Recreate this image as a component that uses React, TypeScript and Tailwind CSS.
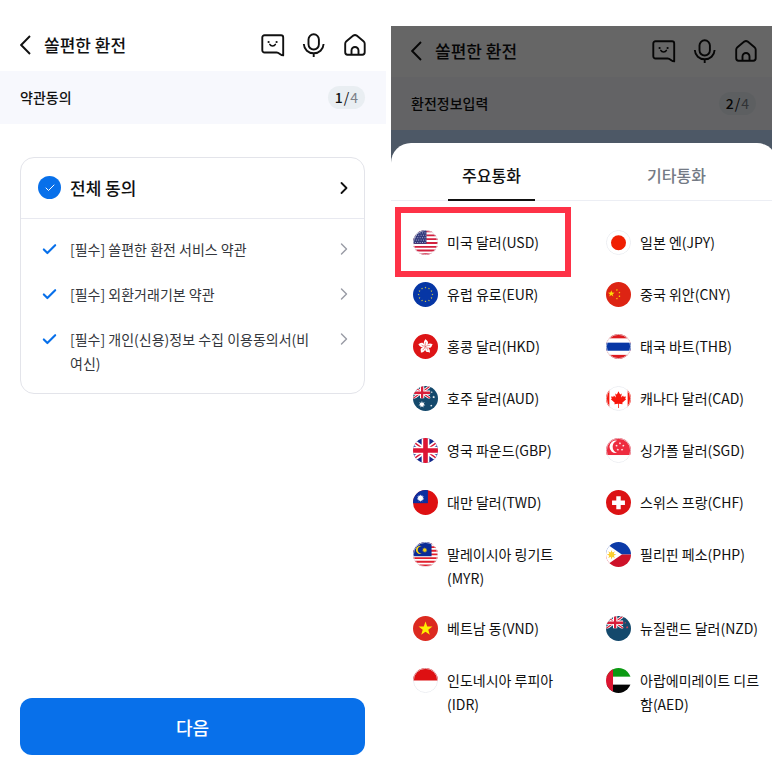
import clsx from "clsx";
import { Check, ChevronRight } from "lucide-react";
import { useState, type ReactNode } from "react";

const AGREEMENTS = [
  "[필수] 쏠편한 환전 서비스 약관",
  "[필수] 외환거래기본 약관",
  "[필수] 개인(신용)정보 수집 이용동의서(비여신)",
];

const CURRENCIES = [
  { code: "USD", name: "미국 달러" },
  { code: "JPY", name: "일본 엔" },
  { code: "EUR", name: "유럽 유로" },
  { code: "CNY", name: "중국 위안" },
  { code: "HKD", name: "홍콩 달러" },
  { code: "THB", name: "태국 바트" },
  { code: "AUD", name: "호주 달러" },
  { code: "CAD", name: "캐나다 달러" },
  { code: "GBP", name: "영국 파운드" },
  { code: "SGD", name: "싱가폴 달러" },
  { code: "TWD", name: "대만 달러" },
  { code: "CHF", name: "스위스 프랑" },
  { code: "MYR", name: "말레이시아 링기트" },
  { code: "PHP", name: "필리핀 페소" },
  { code: "VND", name: "베트남 동" },
  { code: "NZD", name: "뉴질랜드 달러" },
  { code: "IDR", name: "인도네시아 루피아" },
  { code: "AED", name: "아랍에미레이트 디르함" },
];

// Flags with white at the edge need an outline against the sheet
const OUTLINED = ["USD", "JPY", "THB", "CAD", "SGD", "MYR", "IDR"];

function starPoints(
  cx: number,
  cy: number,
  r: number,
  tips = 5,
  inner = 0.4,
  turn = 0,
) {
  return Array.from({ length: tips * 2 }, (_, i) => {
    const radius = i % 2 === 0 ? r : r * inner;
    const angle = (Math.PI * i) / tips - Math.PI / 2 + turn;
    return `${(cx + radius * Math.cos(angle)).toFixed(2)},${(cy + radius * Math.sin(angle)).toFixed(2)}`;
  }).join(" ");
}

// Union Jack drawn in the upper left quarter of the Pacific flags
function JackCanton() {
  return (
    <svg x="0" y="0" width="18" height="13" viewBox="0 0 18 13">
      <path d="M0 0L18 13M18 0L0 13" stroke="#fff" strokeWidth="3" />
      <path d="M0 0L18 13M18 0L0 13" stroke="#d81e3a" strokeWidth="1.2" />
      <path d="M9.5 0V13M0 7H18" stroke="#fff" strokeWidth="4.4" />
      <path d="M9.5 0V13M0 7H18" stroke="#d81e3a" strokeWidth="2.4" />
    </svg>
  );
}

const FLAGS: Record<string, ReactNode> = {
  USD: (
    <>
      <rect width="26" height="26" fill="#fff" />
      <path
        d="M0 1.5H26M0 5.5H26M0 9.5H26M0 13.5H26M0 17.5H26M0 21.3H26M0 25H26"
        stroke="#d2213f"
        strokeWidth="1.9"
      />
      <rect width="14" height="14.4" fill="#343a7c" />
      <path
        d="M2 3H14M3 5.5H14M2 8H14M3 10.5H14M2 13H14"
        stroke="#c9cce6"
        strokeWidth="0.9"
        strokeDasharray="0.9 1.6"
      />
    </>
  ),
  EUR: (
    <>
      <rect width="26" height="26" fill="#0636a5" />
      {Array.from({ length: 12 }, (_, i) => (
        <polygon
          key={i}
          fill="#e5d43c"
          points={starPoints(
            13 + 7.2 * Math.cos((i * Math.PI) / 6),
            13 + 7.2 * Math.sin((i * Math.PI) / 6),
            1.1,
          )}
        />
      ))}
    </>
  ),
  HKD: (
    <>
      <rect width="26" height="26" fill="#dd1416" />
      {[12, 84, 156, 228, 300].map((deg) => (
        <g key={deg} transform={`rotate(${deg} 13 13)`}>
          <path
            d="M13 12.8C10.4 11.2 9.4 8.2 11.6 5.2C12.2 6.6 14.8 6.4 14.8 9.2C14.8 10.8 13.6 11.6 13 12.8Z"
            fill="#fff"
          />
          <path
            d="M13 12C12 10.6 11.9 9.4 12.5 8.4"
            fill="none"
            stroke="#dd1416"
            strokeWidth="0.5"
          />
        </g>
      ))}
    </>
  ),
  AUD: (
    <>
      <rect width="26" height="26" fill="#14496c" />
      <JackCanton />
      <polygon points={starPoints(9.3, 19.2, 3.6, 7, 0.5)} fill="#fff" />
      <polygon points={starPoints(21.5, 11.5, 1.5, 7, 0.5)} fill="#fff" />
      <polygon points={starPoints(19.5, 6.5, 1, 7, 0.5)} fill="#fff" />
      <polygon points={starPoints(19, 20.5, 1.2, 7, 0.5)} fill="#fff" />
    </>
  ),
  GBP: (
    <>
      <rect width="26" height="26" fill="#152a8c" />
      <path d="M-3 1.5L29 24.5M29 1.5L-3 24.5" stroke="#fff" strokeWidth="5" />
      <path d="M-3 1.5L29 24.5M29 1.5L-3 24.5" stroke="#dc1433" strokeWidth="1.5" />
      <path d="M13 0V26M0 13H26" stroke="#fff" strokeWidth="8" />
      <path d="M13 0V26M0 13H26" stroke="#dc1433" strokeWidth="4.8" />
    </>
  ),
  TWD: (
    <>
      <rect width="26" height="26" fill="#de1012" />
      <rect width="15.5" height="13.7" fill="#0c2fa0" />
      <polygon points={starPoints(7.8, 8.5, 3.9, 12, 0.6)} fill="#fff" />
    </>
  ),
  MYR: (
    <>
      <rect width="26" height="26" fill="#fff" />
      <path
        d="M0 1.5H26M0 5.3H26M0 9.1H26M0 12.9H26M0 16.7H26M0 20.5H26M0 24.3H26"
        stroke="#e0202e"
        strokeWidth="1.9"
      />
      <rect width="19.3" height="14.8" fill="#0b2c96" />
      <path d="M9.5 4.6A4.2 4.2 0 1 0 9.5 11.8A3.7 3.7 0 1 1 9.5 4.6Z" fill="#f6d313" />
      <polygon points={starPoints(12.2, 8.3, 2.9, 11, 0.5)} fill="#f6d313" />
    </>
  ),
  VND: (
    <>
      <rect width="26" height="26" fill="#dc2a20" />
      <polygon points={starPoints(13, 13.3, 7.6)} fill="#ffef00" />
    </>
  ),
  IDR: (
    <>
      <rect width="26" height="26" fill="#fff" />
      <rect width="26" height="13" fill="#de1012" />
    </>
  ),
  JPY: (
    <>
      <rect width="26" height="26" fill="#fff" />
      <circle cx="13" cy="13.3" r="7.8" fill="#f01f02" />
    </>
  ),
  CNY: (
    <>
      <rect width="26" height="26" fill="#dd2413" />
      <polygon points={starPoints(5.5, 12.2, 3.6)} fill="#fddb05" />
      <polygon points={starPoints(11.3, 8.3, 1.2, 5, 0.4, 0.4)} fill="#fddb05" />
      <polygon points={starPoints(14, 11, 1.2, 5, 0.4, 0.2)} fill="#fddb05" />
      <polygon points={starPoints(14, 14.8, 1.2)} fill="#fddb05" />
      <polygon points={starPoints(11.3, 17.3, 1.2, 5, 0.4, 0.4)} fill="#fddb05" />
    </>
  ),
  THB: (
    <>
      <rect width="26" height="26" fill="#de1a1f" />
      <rect y="4.5" width="26" height="17.2" fill="#fff" />
      <rect y="9" width="26" height="8.4" fill="#0636a5" />
    </>
  ),
  CAD: (
    <>
      <rect width="26" height="26" fill="#fff" />
      <path d="M0 0H3.5V26H0ZM22.5 0H26V26H22.5Z" fill="#f8170c" />
      <path
        d="M13 5.5L14.7 8.8L16.4 7.9L15.7 12L17.8 10L18.3 11.2L20.8 10.8L20 13.2L21 13.9L16.9 17.4L17.3 18.9L13.4 18.4V23H12.6V18.4L8.7 18.9L9.1 17.4L5 13.9L6 13.2L5.2 10.8L7.7 11.2L8.2 10L10.3 12L9.6 7.9L11.3 8.8Z"
        fill="#f8170c"
      />
    </>
  ),
  SGD: (
    <>
      <rect width="26" height="26" fill="#fff" />
      <rect width="26" height="17.7" fill="#ee2c3f" />
      <path d="M11.5 2.8A6.5 6.5 0 1 0 11.5 15.5A6.7 6.7 0 0 1 11.5 2.8Z" fill="#fff" />
      {[0, 1, 2, 3, 4].map((i) => (
        <polygon
          key={i}
          fill="#fff"
          points={starPoints(
            14.5 + 3.7 * Math.sin((i * Math.PI * 2) / 5),
            9.2 - 3.7 * Math.cos((i * Math.PI * 2) / 5),
            1.4,
          )}
        />
      ))}
    </>
  ),
  CHF: (
    <>
      <rect width="26" height="26" fill="#dc1214" />
      <path d="M13 6.6V20M6.3 13.3H19.7" stroke="#fff" strokeWidth="4.6" />
    </>
  ),
  PHP: (
    <>
      <rect width="26" height="13" fill="#0c3aa8" />
      <rect y="13" width="26" height="13" fill="#ce1229" />
      <path d="M-1 1L16.5 13L-1 25Z" fill="#fff" />
      <polygon points={starPoints(5.8, 13.2, 5, 8, 0.45)} fill="#fbc926" />
      <circle cx="5.8" cy="13.2" r="2.6" fill="#fbd030" />
    </>
  ),
  NZD: (
    <>
      <rect width="26" height="26" fill="#14496c" />
      <JackCanton />
      <polygon points={starPoints(22, 11.8, 1.6)} fill="#e0405a" />
      <polygon points={starPoints(20, 7, 1.1)} fill="#e0405a" />
    </>
  ),
  AED: (
    <>
      <rect width="26" height="26" fill="#fff" />
      <rect width="26" height="9" fill="#0b9a12" />
      <rect y="17.3" width="26" height="9" fill="#050505" />
      <rect width="7.3" height="26" fill="#dc1530" />
    </>
  ),
};

function Flag({ code }: { code: string }) {
  return (
    <svg
      viewBox="0 0 26 26"
      className="size-[25px] shrink-0 overflow-hidden rounded-full"
      aria-hidden="true"
    >
      {FLAGS[code]}
      {OUTLINED.includes(code) && (
        <circle cx="13" cy="13" r="12.6" fill="none" stroke="#e6e9ee" strokeWidth="0.8" />
      )}
    </svg>
  );
}

function ScreenHeader() {
  return (
    <header className="flex h-[51px] items-center pr-[19px] pb-[2px] pl-5">
      <button type="button" aria-label="뒤로" className="mr-3">
        <svg viewBox="0 0 12 20" className="h-5 w-3" fill="none" stroke="currentColor">
          <path d="M10 1L1.2 10L10 19" strokeWidth="1.9" />
        </svg>
      </button>
      <h1 className="text-[17px] font-medium">쏠편한 환전</h1>
      <div className="ml-auto flex gap-[17px]">
        <button type="button" aria-label="챗봇">
          <svg viewBox="0 0 24 24" className="size-6" fill="none" stroke="currentColor" strokeWidth="1.9">
            <path
              d="M3.5 2.3H20A2.2 2.2 0 0 1 22.2 4.5V22.4C19.4 22.4 18.4 19.5 15.7 19.5H3.5A2.2 2.2 0 0 1 1.3 17.3V4.5A2.2 2.2 0 0 1 3.5 2.3Z"
              strokeLinejoin="round"
            />
            <path d="M8.8 11.4C9.8 13.4 13.4 13.4 14.4 11.4" strokeWidth="1.5" strokeLinecap="round" />
            <circle cx="7.6" cy="9" r="1.1" fill="currentColor" stroke="none" />
            <circle cx="15.6" cy="9" r="1.1" fill="currentColor" stroke="none" />
          </svg>
        </button>
        <button type="button" aria-label="음성">
          <svg viewBox="0 0 24 24" className="size-6" fill="none" stroke="currentColor" strokeWidth="1.9">
            <rect x="6.5" y="1.3" width="10.4" height="15.2" rx="5.2" />
            <path d="M1.8 11C2.1 16.5 6.3 20.3 11.7 20.3S21.3 16.5 21.6 11M11.7 20.3V24" />
          </svg>
        </button>
        <button type="button" aria-label="홈">
          <svg viewBox="0 0 24 24" className="size-6" fill="none" stroke="currentColor" strokeWidth="1.9" strokeLinejoin="round">
            <path d="M10.3 2.6Q12 1.4 13.7 2.6L20.5 8.2Q21.7 9.2 21.7 10.7V19.3Q21.7 21.7 19.3 21.7H4.5Q2.2 21.7 2.2 19.3V10.7Q2.2 9.2 3.4 8.2Z" />
            <path d="M8.5 21.7V17.5A3.5 3.5 0 0 1 15.5 17.5V21.7" />
          </svg>
        </button>
      </div>
    </header>
  );
}

function StepBar({ title, step }: { title: string; step: number }) {
  return (
    <div className="flex h-[53px] items-center justify-between bg-[#f7f8fd] pr-[21px] pb-px pl-5">
      <h2 className="text-sm font-medium">{title}</h2>
      <p className="flex h-[23px] items-center rounded-full bg-[#e9eef2] px-[7px] text-sm">
        <span className="font-medium">{step}</span>
        <span className="px-px">/</span>
        <span className="text-[#7c8088]">4</span>
      </p>
    </div>
  );
}

function TermsScreen() {
  const [agreed, setAgreed] = useState(AGREEMENTS.map(() => true));
  const allAgreed = agreed.every(Boolean);

  return (
    <section className="flex flex-col pt-5">
      <ScreenHeader />
      <StepBar title="약관동의" step={1} />

      <div className="mt-[33px] mr-[21px] mb-6 ml-5 rounded-[14px] border border-[#e3e4ea]">
        <div className="flex h-[61px] items-center border-b border-[#e8e9f0] pr-[10px] pb-px pl-[17px]">
          <label className="flex items-center gap-[9px] text-[17px] font-medium">
            <span className="grid place-items-center">
              <input
                type="checkbox"
                checked={allAgreed}
                onChange={() => setAgreed(AGREEMENTS.map(() => !allAgreed))}
                className="size-[23px] appearance-none rounded-full bg-[#c9cdd4] [grid-area:1/1] checked:bg-[#0870ea]"
              />
              <Check className="pointer-events-none size-3 text-white [grid-area:1/1]" strokeWidth={2} />
            </span>
            전체 동의
          </label>
          <button type="button" aria-label="전체 동의 보기" className="ml-auto">
            <ChevronRight className="size-5" strokeWidth={2.2} />
          </button>
        </div>

        <ul className="flex flex-col gap-[21px] pt-[18px] pr-[10px] pb-[18px] pl-5 text-sm leading-6 text-[#33363c]">
          {AGREEMENTS.map((text, i) => (
            <li key={text} className="flex items-start">
              <label className="flex flex-1 items-start gap-3">
                <span className="grid h-6 shrink-0 place-items-center">
                  <input
                    type="checkbox"
                    checked={agreed[i]}
                    onChange={() =>
                      setAgreed(agreed.map((value, n) => (n === i ? !value : value)))
                    }
                    className="size-4 appearance-none [grid-area:1/1]"
                  />
                  <Check
                    className={clsx(
                      "pointer-events-none size-[17px] [grid-area:1/1]",
                      agreed[i] ? "text-[#0870ea]" : "text-[#c9cdd4]",
                    )}
                    strokeWidth={3}
                  />
                </span>
                <span>{text}</span>
              </label>
              <button type="button" aria-label={`${text} 보기`} className="ml-4 flex h-6 items-center text-[#9a9ca6]">
                <ChevronRight className="size-5" strokeWidth={1.7} />
              </button>
            </li>
          ))}
        </ul>
      </div>

      <button
        type="button"
        className="mt-auto mr-[21px] mb-[7px] ml-5 h-[57px] rounded-xl bg-[#0870ea] text-lg font-medium text-white"
      >
        다음
      </button>
    </section>
  );
}

function CurrencyScreen() {
  const [tab, setTab] = useState("주요통화");
  const selected = "USD";

  return (
    <section className="overflow-hidden pt-[26px]">
      <div className="-mr-[5px]">
        <div className="relative">
          <ScreenHeader />
          <StepBar title="환전정보입력" step={2} />
          <div className="h-[33px] bg-[#c0dcff]" />
          <div className="absolute inset-0 bg-black/60" />
        </div>

        <div role="dialog" aria-label="통화 선택" className="relative -mt-5 rounded-t-[20px] bg-white">
          <div role="tablist" className="flex border-b border-[#eceef4] px-2">
            {["주요통화", "기타통화"].map((label) => (
              <button
                key={label}
                type="button"
                role="tab"
                aria-selected={tab === label}
                onClick={() => setTab(label)}
                className="flex flex-1 justify-center text-base font-medium text-[#747a85] aria-selected:text-[#111]"
              >
                <span
                  className={clsx(
                    "-mb-px flex h-[58px] w-[87px] items-center justify-center border-b-2 pt-2",
                    tab === label ? "border-[#111]" : "border-transparent",
                  )}
                >
                  {label}
                </span>
              </button>
            ))}
          </div>

          <ul className="grid grid-cols-2 gap-x-[30px] gap-y-[26px] pt-[29px] pr-2 pb-8 pl-[22px] text-sm leading-6">
            {CURRENCIES.map(({ code, name }) => (
              <li key={code} className="relative min-h-[26px]">
                <button type="button" className="flex items-start gap-[9px] text-left">
                  <Flag code={code} />
                  <span>{`${name}(${code})`}</span>
                </button>
                {code === selected && (
                  <span className="pointer-events-none absolute -top-[23px] right-[5px] -bottom-[21px] -left-[18px] border-6 border-[#fe3247]" />
                )}
              </li>
            ))}
          </ul>
        </div>
      </div>
    </section>
  );
}

export default function App() {
  return (
    <main className="grid min-h-screen grid-cols-[386fr_381fr] gap-[5px] bg-white font-['Noto_Sans_CJK_KR',sans-serif] text-[#111]">
      <TermsScreen />
      <CurrencyScreen />
    </main>
  );
}
